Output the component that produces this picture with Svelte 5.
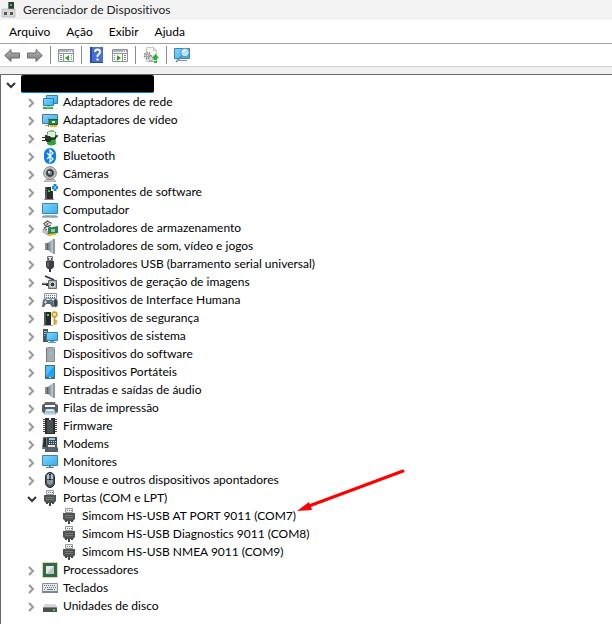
<script>
  let openRoot = $state(true);
  let openPorts = $state(true);

  const menus = ['Arquivo', 'Ação', 'Exibir', 'Ajuda'];

  const ports = [
    { label: 'Simcom HS-USB AT PORT 9011 (COM7)', marked: true },
    { label: 'Simcom HS-USB Diagnostics 9011 (COM8)' },
    { label: 'Simcom HS-USB NMEA 9011 (COM9)' },
  ];

  const nodes = [
    { label: 'Adaptadores de rede', icon: 'network' },
    { label: 'Adaptadores de vídeo', icon: 'video' },
    { label: 'Baterias', icon: 'battery' },
    { label: 'Bluetooth', icon: 'bluetooth' },
    { label: 'Câmeras', icon: 'camera' },
    { label: 'Componentes de software', icon: 'component' },
    { label: 'Computador', icon: 'computer' },
    { label: 'Controladores de armazenamento', icon: 'storage' },
    { label: 'Controladores de som, vídeo e jogos', icon: 'speaker' },
    { label: 'Controladores USB (barramento serial universal)', icon: 'usb' },
    { label: 'Dispositivos de geração de imagens', icon: 'imaging' },
    { label: 'Dispositivos de Interface Humana', icon: 'hid' },
    { label: 'Dispositivos de segurança', icon: 'security' },
    { label: 'Dispositivos de sistema', icon: 'system' },
    { label: 'Dispositivos do software', icon: 'software' },
    { label: 'Dispositivos Portáteis', icon: 'portable' },
    { label: 'Entradas e saídas de áudio', icon: 'speaker' },
    { label: 'Filas de impressão', icon: 'printer' },
    { label: 'Firmware', icon: 'firmware' },
    { label: 'Modems', icon: 'modem' },
    { label: 'Monitores', icon: 'monitor' },
    { label: 'Mouse e outros dispositivos apontadores', icon: 'mouse' },
    { label: 'Portas (COM e LPT)', icon: 'port', children: ports },
    { label: 'Processadores', icon: 'cpu' },
    { label: 'Teclados', icon: 'keyboard' },
    { label: 'Unidades de disco', icon: 'disk' },
  ];
</script>

{#snippet chevron(open)}
  <svg class="chevron" class:open viewBox="0 0 10 10" aria-hidden="true">
    {#if open}
      <path d="M1 3l4 4 4-4" />
    {:else}
      <path d="M2 1l4 4-4 4" />
    {/if}
  </svg>
{/snippet}

{#snippet icon(name)}
  <svg class="icon" viewBox="0 0 16 16" aria-hidden="true">
    {#if name === 'network'}
      <path d="M4.500 1.500h11v8h-11z" fill="url(#screen)" stroke="#2c7fb4" />
      <path d="M1.500 4.500h10v7h-10z" fill="url(#screen)" stroke="#2c7fb4" />
      <path d="M5 12h3v1h3v2H1v-2h4z" fill="#2eb344" />
      <path d="M5 12h3v2H5z" fill="#7fd68b" />
    {:else if name === 'video'}
      <path d="M.5 2.500h15v9H.5z" fill="url(#screen)" stroke="#4a7894" />
      <path d="M3 13h3v1H3z" fill="#8aa4b4" />
      <path d="M7 7.500h9v5H7z" fill="#23864a" stroke="#176138" />
      <path d="M10 9h3v2h-3z" fill="#d7e6da" />
      <path d="M8 13h7v2H8z" fill="#f0b429" />
      <path d="M6.500 6v9" stroke="#777" />
    {:else if name === 'battery'}
      <path d="M8 0h4v2H8z" fill="#aaa" />
      <path d="M5 2q4-2 9 0v12q-5 3-9 0z" fill="#29a634" />
      <path d="M6 2q4-1 7 0v5H6z" fill="#dff3dc" />
      <path d="M5.500 3v10M13.500 3v10" stroke="#5fc856" />
      <path d="M0 7h3V5h2v1h3q3 3 0 6H4v-1H0v-1h3V8H0z" fill="#303030" />
      <path d="M8 9h3q3 0 3-3h2" fill="none" stroke="#222" stroke-width="1.500" />
    {:else if name === 'bluetooth'}
      <rect x="2" width="12" height="16" rx="6" fill="#087ee8" />
      <path d="M5 5l6 6-3 3V2l3 3-6 6" fill="none" stroke="#fff" stroke-width="1.200" />
    {:else if name === 'camera'}
      <path d="M3 14q5-3 10 0l1 2H2z" fill="#c3c3c3" stroke="#888" stroke-width=".5" />
      <circle cx="8" cy="7" r="6.300" fill="#d3d3d3" stroke="#777" />
      <circle cx="8" cy="7" r="4.200" fill="#363a3e" stroke="#989898" />
      <circle cx="8" cy="7" r="2" fill="#7793a6" />
      <circle cx="7" cy="6" r="1" fill="#eef6fa" />
    {:else if name === 'component'}
      <path d="M3 3h8v13H3z" fill="#282c2e" />
      <path d="M3 3h2v13H3z" fill="#50585c" />
      <path d="M6 6h2v2H6z" fill="#20dc36" />
      <path d="M2 15h10v1H2z" fill="#888" />
      <path d="M9 0h7v7H9z" fill="#fff" />
      <path d="M10 3.500h6M13 0v7" stroke="#198bd2" stroke-width="3" />
      <path d="M12 3.500h2M13 2v3" stroke="#8ed0f5" />
    {:else if name === 'computer' || name === 'monitor'}
      <path d="M.5 1.500h15v10H.5z" fill="url(#screen)" stroke="#3b83b0" />
      {#if name === 'computer'}
        <path d="M2 13h12l2 2H0z" fill="#a3bdcc" />
        <path d="M0 15h16" stroke="#678599" />
      {:else}
        <path d="M7 12h2v1h3v1H4v-1h3z" fill="#5a7889" />
      {/if}
    {:else if name === 'storage'}
      <path d="M1.500 4l4-3 4 2.500M9 5L5.500 6.500 2 4.500M2 8l3-1.500L9 8M2 8l3 2" fill="none" stroke="#555" stroke-width="1.300" />
      <path d="M4 4l2-1 1 1-2 1z" fill="#444" />
      <path d="M6 8l10-2v7l-10 2z" fill="#218552" />
      <path d="M9 9h4v3H9z" fill="#93c5a5" />
      <path d="M1 9l5 3v3l-5-3z" fill="#c9cfcc" stroke="#777" stroke-width=".6" />
      <path d="M6 14l8-1v2l-8 1z" fill="#edb428" />
    {:else if name === 'speaker'}
      <path d="M3 5h3v7H3z" fill="#53616b" />
      <path d="M6 5l5-4v15l-5-4z" fill="url(#metal)" />
      <path d="M11 1h2v15h-2z" fill="#8c989f" />
      <path d="M4 5v7" stroke="#aeb8bd" />
    {:else if name === 'usb'}
      <path d="M5.500.5h5v4h-5z" fill="#ddd" stroke="#777" />
      <path d="M6 2h1v2H6zM9 2h1v2H9z" fill="#555" />
      <path d="M4 5h8v6l-2 2H6l-2-2z" fill="#3c3f40" />
      <path d="M6 6v5" stroke="#858888" />
      <path d="M8 13v3" stroke="#333" stroke-width="2" />
    {:else if name === 'imaging'}
      <path d="M4 1l9 4h2v9H6V8L3 4z" fill="#ededed" />
      <path d="M3 2l9 4" stroke="#333" stroke-width="1.500" />
      <path d="M6.500 6.500h8v8h-8z" fill="#aab0b3" stroke="#666" />
      <path d="M0 9h6v3H4v-1H0z" fill="#333" />
      <path d="M0 9h5" stroke="#ccc" />
      <circle cx="10.500" cy="10.500" r="2.400" fill="#30383c" stroke="#eee" />
    {:else if name === 'hid'}
      <path d="M2.500 1.500h12v5h-12z" fill="#eef1f2" stroke="#8d9599" />
      <path d="M4 3.500h9M4 5.500h9" stroke="#697479" stroke-dasharray="1 1" />
      <path d="M1 8q2-2 4 0h2q3-2 4 1l1 6h-2l-2-3H4l-2 3H0z" fill="#596a76" />
      <path d="M2 10h3M3.500 8.500v3" stroke="#d2dfe7" />
      <path d="M8 9h2v1H8z" fill="#38a1e0" />
      <rect x="11.500" y="7" width="4" height="8" rx="2" fill="#37434b" stroke="#87939b" stroke-width=".7" />
    {:else if name === 'security'}
      <path d="M2 2h7v13H2z" fill="#25292a" />
      <path d="M2 2h2v13H2z" fill="#535859" />
      <path d="M5 4h2v2H5z" fill="#31ed37" />
      <path d="M1 15h10v1H1z" fill="#aaa" />
      <circle cx="12.500" cy="4.500" r="2.300" fill="#fff2c8" stroke="#d69b20" stroke-width="1.700" />
      <path d="M12.500 7v8M13 11h2M13 13h2" stroke="#d69b20" stroke-width="1.700" />
    {:else if name === 'system'}
      <path d="M1 1h5v13H1z" fill="#4c5357" />
      <path d="M2 3.500h3M2 5.500h3" stroke="#b4bdc2" />
      <path d="M2 7h1v1H2z" fill="#38dd4c" />
      <path d="M4.500 4.500h11v8h-11z" fill="url(#screen)" stroke="#317fae" />
      <path d="M8 13h4v1H8zM6 14h8v1H6z" fill="#7396aa" />
    {:else if name === 'software'}
      <path d="M4 2l2-1h5l2 1v14H4z" fill="#899297" />
      <path d="M5 2h7v13H5z" fill="#a5adb1" />
      <path d="M4.500 2v14" stroke="#69757c" />
      <path d="M8 6h2v2H8z" fill="#53ddf3" />
    {:else if name === 'portable'}
      <path d="M3 1h10v14H3z" fill="#4a6a80" />
      <path d="M4 2h8v11H4z" fill="#1ca4f5" />
      <path d="M4 2h8L4 12z" fill="#52bdf9" />
      <path d="M7 13.500h2" stroke="#ddd" />
    {:else if name === 'printer'}
      <path d="M3 2h10l1 3H2z" fill="#626a6e" />
      <rect x="0" y="4" width="16" height="9" rx="2" fill="#555c60" />
      <path d="M3 5h10v2H3z" fill="#fff" />
      <path d="M4 9h8l2 5H2z" fill="#f4f7f8" stroke="#667b89" stroke-width=".6" />
      <path d="M4 11h8l1 2H3z" fill="#84c9ed" />
    {:else if name === 'firmware'}
      <path d="M1 1.500h14M1 3.500h14M1 5.500h14M1 7.500h14M1 9.500h14M1 11.500h14M1 13.500h14" stroke="#444" />
      <path d="M3 0h10v16H3z" fill="#2c2f30" />
      <path d="M5 2h6v13H5z" fill="#4a4f51" />
      <path d="M7 0h2v2H7z" fill="#eee" />
    {:else if name === 'modem'}
      <path d="M1 1h14v9H1z" fill="#3f484e" />
      <path d="M1 1h4v12H0z" fill="#697276" />
      <path d="M2 2h2v9H1z" fill="#262d31" />
      <path d="M7 2h6v2H7z" fill="#86cff4" />
      <path d="M7 5.500h7M7 7.500h7" stroke="#d1dde5" stroke-dasharray="1 1" />
      <path d="M3 12l2-3h9l2 3v4H3z" fill="#555d61" />
      <path d="M6 9h7v2H6z" fill="#e2e6e8" />
      <path d="M7 13.500h6" stroke="#3391d1" stroke-dasharray="1 1" />
    {:else if name === 'mouse'}
      <rect x="3.500" y=".5" width="9" height="15" rx="4.500" fill="#4b565e" stroke="#252d32" />
      <path d="M5 3q3-3 6 0v4H5z" fill="#b6c2ca" />
      <path d="M5 8v3q3 4 6 0V8" fill="#8a979f" />
      <path d="M8 2v6" stroke="#15191c" stroke-width="2" />
      <path d="M8 3v4" stroke="#6dc5ef" />
    {:else if name === 'port'}
      <path d="M4.500.5h7v4h-7z" fill="#eee" stroke="#999" />
      <path d="M6 2.500h5" stroke="#777" stroke-dasharray="1 1" />
      <path d="M2 5h12v6l-2 2H4l-2-2z" fill="#515454" />
      <path d="M4 7.500h8M4 9.500h8" stroke="#747777" />
      <path d="M4 12h2v2H4zM10 12h2v2h-2zM7 12h2v4H7z" fill="#444747" />
    {:else if name === 'cpu'}
      <rect x=".5" y=".5" width="15" height="15" fill="none" stroke="#c8a13d" stroke-dasharray="1 1" />
      <path d="M1 1h14v14H1z" fill="#2c6c4c" />
      <path d="M4 4h8v8H4z" fill="#e6e9e8" />
      <path d="M4 12L12 4v8z" fill="#bcc5c0" />
    {:else if name === 'keyboard'}
      <path d="M.5 3.500h15v8H.5z" fill="#e2e7ea" stroke="#879196" />
      <path d="M2 5.500h12M3 7.500h11M2 9.500h2M12 9.500h2" stroke="#67757d" stroke-dasharray="1 1" />
      <path d="M5 9.500h6" stroke="#67757d" />
      <path d="M0 11h16v2H0z" fill="#7c888f" />
    {:else if name === 'disk'}
      <path d="M3 6h10l2 3H1z" fill="#d5d5d5" />
      <path d="M1 9h14v5H1z" fill="#4b4f51" />
      <path d="M1 9h14v1H1z" fill="#858989" />
      <path d="M11 11h2v2h-2z" fill="#2fe042" />
    {/if}
  </svg>
{/snippet}

{#snippet panel(flip)}
  <svg class="tool-icon" viewBox="0 0 16 16" aria-hidden="true">
    <path d="M.5 2.500h15v12H.5z" fill="#fafafa" stroke="#8a949c" />
    <path d="M1 3h14v2H1z" fill="#acb5bc" />
    <path d="M11 4h1M13 4h1" stroke="#fff" />
    <path d="M1 6.500h14" stroke="#8a949c" />
    {#if flip}
      <path d="M10.500 7v7" stroke="#8a949c" />
      <path d="M12 8.500h2M12 10.500h2M12 12.500h2M2 8.500h1M2 10.500h1M2 12.500h1" stroke="#7a8790" />
      <path d="M5 8l4 3-4 3z" fill="#31a51d" />
    {:else}
      <path d="M5.500 7v7" stroke="#8a949c" />
      <path d="M2 8.500h2M2 10.500h2M2 12.500h2M13 8.500h1M13 10.500h1M13 12.500h1" stroke="#7a8790" />
      <path d="M11 8l-4 3 4 3z" fill="#31a51d" />
    {/if}
  </svg>
{/snippet}

<svg class="defs" aria-hidden="true">
  <defs>
    <linearGradient id="screen" x1="0" y1="0" x2="1" y2="1">
      <stop offset="0" stop-color="#86d3fb" />
      <stop offset="1" stop-color="#35adf0" />
    </linearGradient>
    <linearGradient id="metal">
      <stop offset="0" stop-color="#6f7d86" />
      <stop offset="1" stop-color="#c8d0d4" />
    </linearGradient>
    <linearGradient id="arrow" x1="0" y1="0" x2="0" y2="1">
      <stop offset="0" stop-color="#b8b8b8" />
      <stop offset="1" stop-color="#777" />
    </linearGradient>
  </defs>
</svg>

<div class="window">
  <header class="title">
    <svg class="app-icon" viewBox="0 0 16 16" aria-hidden="true">
      <path d="M7 0h6v7H7z" fill="#35393a" />
      <path d="M7 0h1v7H7z" fill="#777" />
      <path d="M9 2h2v2H9z" fill="#20dc36" />
      <path d="M1 7h13v8H1z" fill="#d9d9d9" stroke="#aaa" stroke-width=".6" />
      <path d="M3 10h3v3H3zM9 10h3v3H9z" fill="#555" />
    </svg>
    <h1>Gerenciador de Dispositivos</h1>
  </header>

  <nav class="menu">
    {#each menus as menu}
      <button>{menu}</button>
    {/each}
  </nav>

  <div class="toolbar" role="toolbar" aria-label="Ferramentas">
    <button aria-label="Voltar">
      <svg class="tool-icon" viewBox="0 0 16 16"><path d="M.7 8.500L7 2.500V6h8.500v5H7v3.500z" fill="url(#arrow)" stroke="#6c6c6c" /></svg>
    </button>
    <button aria-label="Avançar">
      <svg class="tool-icon" viewBox="0 0 16 16"><path d="M15.300 8.500L9 2.500V6H.5v5H9v3.500z" fill="url(#arrow)" stroke="#6c6c6c" /></svg>
    </button>
    <span class="separator"></span>
    <button aria-label="Mostrar árvore">{@render panel(false)}</button>
    <span class="separator"></span>
    <button aria-label="Ajuda">
      <svg class="tool-icon" viewBox="0 0 16 16">
        <path d="M1 0h13v16H1z" fill="#2949a8" />
        <path d="M3 0h11v15H3z" fill="#496fd0" />
        <path d="M6 5q0-2.500 2.500-2.500T11 5q0 1.500-1.500 2.500T8.500 10" fill="none" stroke="#fff" stroke-width="1.900" />
        <path d="M7.500 11.500h2v2h-2z" fill="#fff" />
      </svg>
    </button>
    <button aria-label="Mostrar ações">{@render panel(true)}</button>
    <span class="separator"></span>
    <button aria-label="Atualizar driver">
      <svg class="tool-icon" viewBox="0 0 16 16">
        <path d="M3.500.5h7l3 3v11h-10z" fill="#f8f8f8" stroke="#c5c5c5" />
        <path d="M10.500.5v3h3" fill="none" stroke="#c5c5c5" />
        <circle cx="4.500" cy="8.500" r="3" fill="#ddd" stroke="#888" stroke-width="1.700" stroke-dasharray="1.500 1" />
        <circle cx="4.500" cy="8.500" r="1.200" fill="#fff" stroke="#888" />
        <circle cx="8" cy="11.500" r="2.500" fill="#ddd" stroke="#888" stroke-width="1.500" stroke-dasharray="1.300 1" />
        <path d="M12.500 7l3.500 4h-2v2h-3v-2H9zM11 14h3v2h-3z" fill="#21b52c" />
      </svg>
    </button>
    <span class="separator"></span>
    <button aria-label="Verificar alterações de hardware">
      <svg class="tool-icon" viewBox="0 0 16 16">
        <path d="M.5 1.500h15v10H.5z" fill="url(#screen)" stroke="#3b83b0" />
        <path d="M5 13h8v1H5z" fill="#7e929e" />
        <path d="M8 9l-6 6" stroke="#5b7f9a" stroke-width="1.500" />
        <circle cx="11" cy="5.500" r="4.200" fill="#b9e4fb" stroke="#5f93ad" />
        <path d="M8.500 5q1-2 3-2" fill="none" stroke="#fff" />
      </svg>
    </button>
  </div>

  <main>
    <ul class="tree">
      <li>
        <div class="row">
          <button class="toggle" aria-label="Expandir computador" aria-expanded={openRoot} onclick={() => (openRoot = !openRoot)}>
            {@render chevron(openRoot)}
          </button>
          <span class="redacted"></span>
        </div>
        {#if openRoot}
          <ul class="level">
            {#each nodes as node}
              <li>
                <div class="row">
                  {#if node.children}
                    <button class="toggle" aria-label={node.label} aria-expanded={openPorts} onclick={() => (openPorts = !openPorts)}>
                      {@render chevron(openPorts)}
                    </button>
                  {:else}
                    <button class="toggle" aria-label={node.label} aria-expanded="false">
                      {@render chevron(false)}
                    </button>
                  {/if}
                  {@render icon(node.icon)}
                  <span>{node.label}</span>
                </div>
                {#if node.children && openPorts}
                  <ul class="ports">
                    {#each node.children as port}
                      <li class="row">
                        {@render icon('port')}
                        <span class="label">
                          {port.label}
                          {#if port.marked}
                            <svg class="pointer" viewBox="0 0 108 44" aria-hidden="true">
                              <path d="M106 2L12 37" stroke="#f00" stroke-width="3" stroke-linecap="round" />
                              <path d="M0 42l12-9 3 8z" fill="#f00" />
                            </svg>
                          {/if}
                        </span>
                      </li>
                    {/each}
                  </ul>
                {/if}
              </li>
            {/each}
          </ul>
        {/if}
      </li>
    </ul>
  </main>
</div>

<style>
  .window {
    display: flex;
    flex-direction: column;
    min-height: 100vh;
    background: #fff;
    color: #000;
    font: 12px/18px Lato, "Open Sans", sans-serif;
    font-variant-ligatures: none;
  }

  .defs {
    position: absolute;
    width: 0;
    height: 0;
  }

  button {
    padding: 0;
    border: 0;
    background: none;
    color: inherit;
    font: inherit;
  }

  svg {
    display: block;
    flex: none;
  }

  .title {
    display: flex;
    align-items: center;
    gap: 6px;
    height: 20px;
    padding: 0 1px;
    background: #f3f3f3;
  }

  h1 {
    margin: 0;
    font-size: 12px;
    font-weight: 400;
    color: #222;
  }

  .app-icon,
  .icon,
  .tool-icon {
    width: 16px;
    height: 16px;
  }

  .menu {
    display: flex;
    gap: 16px;
    height: 23px;
    padding: 0 9px;
    border-bottom: 1px solid #a0a0a0;
  }

  .toolbar {
    display: flex;
    align-items: center;
    gap: 7px;
    height: 22px;
    padding: 0 4px;
    border-bottom: 1px solid #d0d0d0;
  }

  .separator {
    width: 1px;
    height: 18px;
    background: #8c8c8c;
  }

  main {
    display: flex;
    flex: 1;
    border-top: 7px solid #f0f0f0;
  }

  .tree {
    flex: 1;
    padding-left: 5px;
    border-top: 1px solid #696969;
    border-left: 1px solid #696969;
  }

  ul {
    margin: 0;
    padding: 0;
    list-style: none;
  }

  .row {
    display: flex;
    align-items: center;
    gap: 5px;
    height: 18px;
    white-space: nowrap;
  }

  .level {
    padding-left: 21px;
  }

  .ports {
    padding-left: 34px;
  }

  .toggle {
    width: 10px;
    padding-top: 2px;
  }

  .chevron {
    width: 10px;
    height: 10px;
    fill: none;
    stroke: #999;
    stroke-width: 2;
  }

  .chevron.open {
    stroke: #333;
  }

  .redacted {
    width: 133px;
    height: 17px;
    border-bottom: 1px solid #0078d7;
    border-radius: 2px;
    background: #000;
  }

  .label {
    position: relative;
  }

  .pointer {
    position: absolute;
    left: 100%;
    bottom: 12px;
    width: 108px;
    height: 44px;
    margin-left: 1px;
  }
</style>
